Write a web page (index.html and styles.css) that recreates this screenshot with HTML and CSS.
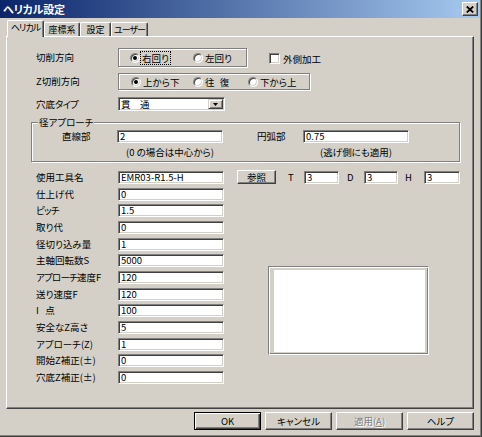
FILE: index.html
```html
<!DOCTYPE html>
<html lang="ja">
<head>
<meta charset="utf-8">
<title>ヘリカル設定</title>
<link rel="stylesheet" href="styles.css">
</head>
<body>
<div class="window">
  <div class="titlebar">
    <span class="title">ヘリカル設定</span>
    <span class="close"><svg width="8" height="7" viewBox="0 0 8 7"><path d="M0.8 0.5 L7.2 6.5 M7.2 0.5 L0.8 6.5" stroke="#000" stroke-width="1.8" fill="none"/></svg></span>
  </div>
  <div class="tabs">
    <div class="tab active w1"><span class="kn">ヘリカル</span></div>
    <div class="tab w2">座標系</div>
    <div class="tab w3">設定</div>
    <div class="tab w4"><span class="kn">ユーザー</span></div>
  </div>
  <div class="panel">
    <div class="row r1">
      <span class="label">切削方向</span>
      <div class="group g1">
        <span class="opt o1"><span class="radio on"></span><span class="focus">右回り</span></span>
        <span class="opt"><span class="radio"></span>左回り</span>
      </div>
      <span class="check"></span><span class="check-text">外側加工</span>
    </div>
    <div class="row r2">
      <span class="label">Z切削方向</span>
      <div class="group g2">
        <span class="opt o21"><span class="radio on"></span>上から下</span>
        <span class="opt o22"><span class="radio"></span>往&nbsp;復</span>
        <span class="opt"><span class="radio"></span>下から上</span>
      </div>
    </div>
    <div class="row r3">
      <span class="label">穴底<span class="kn">タイプ</span></span>
      <div class="combo"><span class="combo-text">貫　通</span><span class="combo-btn"><svg width="5" height="3" viewBox="0 0 5 3"><path d="M0 0H5L2.5 3Z" fill="#000"/></svg></span></div>
    </div>
    <div class="approach">
      <div class="legend">径アプローチ</div>
      <div class="arow">
        <span class="alabel">直線部</span>
        <span class="edit">2</span>
        <span class="alabel2">円弧部</span>
        <span class="edit">0.75</span>
      </div>
      <div class="nrow">
        <span class="note n1">(0 の場合は中心から)</span>
        <span class="note n2">(逃げ側にも適用)</span>
      </div>
    </div>
    <div class="frow tool">
      <span class="label">使用工具名</span>
      <span class="edit">EMR03-R1.5-H</span>
      <span class="btn ref">参照</span>
      <span class="sl slT">T</span><span class="edit eT">3</span>
      <span class="sl slD">D</span><span class="edit eD">3</span>
      <span class="sl slH">H</span><span class="edit eH">3</span>
    </div>
    <div class="lower">
      <div class="fields">
        <div class="frow"><span class="label">仕上げ代</span><span class="edit">0</span></div>
        <div class="frow"><span class="label"><span class="kn">ピッチ</span></span><span class="edit">1.5</span></div>
        <div class="frow"><span class="label">取り代</span><span class="edit">0</span></div>
        <div class="frow"><span class="label">径切り込み量</span><span class="edit">1</span></div>
        <div class="frow"><span class="label">主軸回転数S</span><span class="edit">5000</span></div>
        <div class="frow"><span class="label"><span class="kn">アプローチ</span>速度F</span><span class="edit">120</span></div>
        <div class="frow"><span class="label">送り速度F</span><span class="edit">120</span></div>
        <div class="frow"><span class="label">I&nbsp;&nbsp;&nbsp;点</span><span class="edit">100</span></div>
        <div class="frow"><span class="label">安全なZ高さ</span><span class="edit">5</span></div>
        <div class="frow"><span class="label">アプローチ(Z)</span><span class="edit">1</span></div>
        <div class="frow"><span class="label">開始Z補正(±)</span><span class="edit">0</span></div>
        <div class="frow"><span class="label">穴底Z補正(±)</span><span class="edit">0</span></div>
      </div>
      <div class="preview"><div class="preview-inner"></div></div>
    </div>
  </div>
  <div class="buttons">
    <span class="btn big default">OK</span>
    <span class="btn big">キャンセル</span>
    <span class="btn big disabled">適用(<u>A</u>)</span>
    <span class="btn big">ヘルプ</span>
  </div>
</div>
</body>
</html>
```

FILE: styles.css
```css
* { box-sizing: border-box; }
html, body { margin: 0; padding: 0; }
body {
  width: 482px;
  height: 437px;
  overflow: hidden;
  background: #d4d0c8;
  font-family: "Noto Sans CJK JP", "Noto Sans", sans-serif;
  font-size: 9.5px;
  color: #000;
  font-feature-settings: "palt";
}
.kn { letter-spacing: -0.8px; }
.window {
  width: 482px;
  height: 437px;
  background: #d4d0c8;
  border-right: 1px solid #404040;
  border-bottom: 1px solid #404040;
  box-shadow: inset -1px -1px 0 #808080;
}
.titlebar {
  height: 18px;
  margin-right: 1px;
  background: linear-gradient(to right, #0a246a, #a6caf0);
  display: flex;
  align-items: center;
  justify-content: space-between;
  padding: 0 2px 0 3px;
}
.title {
  color: #fff;
  font-weight: bold;
  font-size: 11px;
  line-height: 14px;
  letter-spacing: -0.2px;
}
.close {
  width: 16px;
  height: 14px;
  background: #d4d0c8;
  border: 1px solid;
  border-color: #fff #404040 #404040 #fff;
  box-shadow: inset -1px -1px 0 #808080;
  display: flex;
  align-items: center;
  justify-content: center;
}
.close svg { display: block; }

.tabs {
  display: flex;
  align-items: flex-end;
  height: 18px;
  padding-left: 7px;
  position: relative;
  z-index: 1;
}
.tab {
  height: 14px;
  border: 1px solid;
  border-bottom: none;
  border-color: #fff #404040 #fff #fff;
  box-shadow: inset -1px 0 0 #808080;
  border-radius: 2px 2px 0 0;
  background: #d4d0c8;
  display: flex;
  align-items: center;
  justify-content: center;
  font-size: 9px;
  line-height: 12px;
  padding-top: 1px;
  white-space: nowrap;
}
.tab .kn { letter-spacing: -1px; }
.tab.active {
  height: 17px;
  margin-bottom: -1px;
  padding-top: 0;
  padding-bottom: 2px;
}
.w1 { width: 37px; }
.w2 { width: 36px; }
.w3 { width: 31px; }
.w4 { width: 37px; }

.panel {
  margin-left: 6px;
  width: 468px;
  height: 373px;
  border: 1px solid;
  border-color: #fff #404040 #404040 #fff;
  box-shadow: inset -1px -1px 0 #808080;
}
.row {
  display: flex;
  align-items: center;
  padding-left: 29px;
}
.label {
  width: 82px;
  flex: none;
  white-space: nowrap;
  line-height: 13px;
}
.r1 { margin-top: 11px; height: 19px; }
.r2 { margin-top: 6px; height: 17px; }
.r3 { margin-top: 7px; height: 14px; }

.group {
  height: 100%;
  border: 1px solid #808080;
  box-shadow: inset 1px 1px 0 #fff, 1px 1px 0 #fff;
  display: flex;
  align-items: center;
  flex: none;
}
.g1 { width: 129px; padding-left: 11px; }
.g2 { width: 192px; padding-left: 12px; }
.opt {
  display: flex;
  align-items: center;
  gap: 2px;
  white-space: nowrap;
  line-height: 12px;
}
.o1 { width: 63px; }
.o21 { width: 62px; }
.o22 { width: 55px; word-spacing: 3px; }
.radio {
  width: 10px;
  height: 10px;
  flex: none;
  border-radius: 50%;
  background: #fff;
  border: 1px solid;
  border-color: #808080 #fff #fff #808080;
  box-shadow: inset 1px 1px 0 #404040, inset -1px -1px 0 #d4d0c8;
  position: relative;
}
.radio.on::after {
  content: "";
  position: absolute;
  left: 2px;
  top: 2px;
  width: 4px;
  height: 4px;
  border-radius: 50%;
  background: #000;
}
.focus {
  outline: 1px dotted #000;
  padding: 0 1px;
  margin-left: -1px;
}
.check {
  width: 11px;
  height: 11px;
  flex: none;
  margin-left: 22px;
  margin-top: 2px;
  background: #fff;
  border: 1px solid;
  border-color: #808080 #fff #fff #808080;
  box-shadow: inset 1px 1px 0 #404040, inset -1px -1px 0 #d4d0c8;
}
.check-text { margin-left: 3px; margin-top: 2px; line-height: 12px; }

.combo {
  width: 107px;
  height: 14px;
  background: #fff;
  border: 1px solid;
  border-color: #808080 #fff #fff #808080;
  box-shadow: inset 1px 1px 0 #404040, inset -1px -1px 0 #d4d0c8;
  display: flex;
  align-items: center;
  justify-content: space-between;
  padding: 1px 1px 1px 2px;
}
.combo-text { line-height: 10px; }
.combo-btn {
  width: 15px;
  height: 10px;
  background: #d4d0c8;
  border: 1px solid;
  border-color: #d4d0c8 #404040 #404040 #d4d0c8;
  box-shadow: inset 1px 1px 0 #fff, inset -1px -1px 0 #808080;
  display: flex;
  align-items: center;
  justify-content: center;
}
.combo-btn svg { display: block; }

.approach {
  margin: 11px 0 0 24px;
  width: 429px;
  height: 40px;
  border: 1px solid #808080;
  box-shadow: inset 1px 1px 0 #fff, 1px 1px 0 #fff;
}
.legend {
  width: fit-content;
  margin: -7px 0 0 6px;
  padding: 0 1px;
  line-height: 12px;
  background: #d4d0c8;
}
.arow {
  display: flex;
  align-items: center;
  margin-top: 2px;
  padding-left: 30px;
  height: 13px;
}
.alabel { width: 55px; line-height: 13px; }
.alabel2 { width: 46px; margin-left: 34px; line-height: 13px; }
.nrow {
  display: flex;
  margin-top: 3px;
  padding-left: 85px;
  line-height: 12px;
}
.note { text-align: center; width: 106px; white-space: nowrap; }
.n2 { margin-left: 80px; }

.edit {
  width: 106px;
  height: 13px;
  flex: none;
  background: #fff;
  border: 1px solid;
  border-color: #808080 #fff #fff #808080;
  box-shadow: inset 1px 1px 0 #404040, inset -1px -1px 0 #d4d0c8;
  padding-left: 2px;
  line-height: 11px;
  white-space: nowrap;
  overflow: hidden;
}
.frow {
  display: flex;
  align-items: flex-start;
  height: 16.667px;
  padding-left: 29px;
}
.tool { margin-top: 9px; }
.btn {
  display: flex;
  align-items: center;
  justify-content: center;
  background: #d4d0c8;
  border: 1px solid;
  border-color: #fff #404040 #404040 #fff;
  box-shadow: inset -1px -1px 0 #808080;
  white-space: nowrap;
  line-height: 12px;
}
.ref { width: 39px; height: 14px; margin-left: 13px; margin-top: -1px; }
.sl { line-height: 13px; flex: none; }
.slT { margin-left: 12px; width: 16px; }
.eT { width: 35px; }
.slD { margin-left: 8px; width: 17px; }
.eD { width: 34px; }
.slH { margin-left: 7px; width: 19px; }
.eH { width: 36px; }

.lower { display: flex; }
.fields { width: 217px; flex: none; }
.preview {
  margin-left: 44px;
  margin-top: 78.33px;
  width: 161px;
  height: 89px;
  border: 1px solid;
  border-color: #808080 #fff #fff #808080;
  box-shadow: inset 1px 1px 0 #fff, inset -1px -1px 0 #808080;
  padding: 3px 3px 2px 5px;
}
.preview-inner { background: #fff; height: 100%; }

.buttons {
  display: flex;
  justify-content: flex-end;
  gap: 4px;
  padding-right: 7px;
  margin-top: 3px;
}
.big { width: 67px; height: 18px; }
.default {
  border-color: #000;
  box-shadow: inset 1px 1px 0 #fff, inset -1px -1px 0 #404040, inset -2px -2px 0 #808080;
}
.disabled { color: #808080; text-shadow: 1px 1px 0 #fff; }
.disabled u { text-decoration-thickness: 1px; }
```
